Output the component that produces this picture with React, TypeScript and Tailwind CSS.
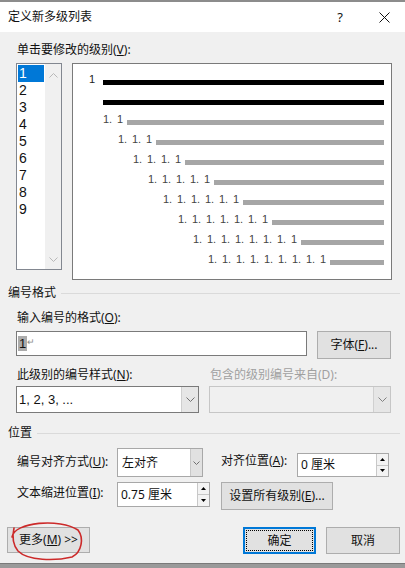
import React from "react";

const levelIndents = [
  "pl-[30px]",
  "pl-[45px]",
  "pl-[60px]",
  "pl-[75px]",
  "pl-[90px]",
  "pl-[105px]",
  "pl-[120px]",
  "pl-[135px]",
];

function Chevron({ up = false, color = "#606060" }: { up?: boolean; color?: string }) {
  return (
    <svg width="9" height="5" viewBox="0 0 9 5">
      <path
        d={up ? "M0.5 4.5 L4.5 0.5 L8.5 4.5" : "M0.5 0.5 L4.5 4.5 L8.5 0.5"}
        fill="none"
        stroke={color}
        strokeWidth="1"
      />
    </svg>
  );
}

function Spin() {
  return (
    <div className="w-[12px] h-full flex flex-col border-l border-[#c8c8c8]">
      <div className="flex-1 flex items-center justify-center bg-[#f3f3f3] border-b border-[#c8c8c8]">
        <svg width="5" height="3" viewBox="0 0 5 3">
          <path d="M0 3 L2.5 0 L5 3 Z" fill="#000" />
        </svg>
      </div>
      <div className="flex-1 flex items-center justify-center bg-[#f3f3f3]">
        <svg width="5" height="3" viewBox="0 0 5 3">
          <path d="M0 0 L2.5 3 L5 0 Z" fill="#000" />
        </svg>
      </div>
    </div>
  );
}

function GroupHeader({ title }: { title: string }) {
  return (
    <div className="flex items-center pl-[8px] pr-[5px]">
      <span className="leading-[16px]">{title}</span>
      <div className="flex-1 h-px bg-[#dadada] ml-[5px]" />
    </div>
  );
}

function LevelText({ level }: { level: number }) {
  const segs = Array.from({ length: level - 1 });
  return (
    <span className="flex text-[11px] leading-[11px] text-[#454545] font-[family-name:'Liberation_Sans',sans-serif]">
      {segs.map((_, i) => (
        <span key={i} className="w-[14px]">
          1.
        </span>
      ))}
      <span>1</span>
    </span>
  );
}

export default function App() {
  const levels = [1, 2, 3, 4, 5, 6, 7, 8, 9];

  return (
    <div className="w-[405px] h-[568px] bg-[#f0f0f0] flex flex-col relative overflow-hidden text-[12px] text-[#111] font-[family-name:'Noto_Sans','Noto_Sans_CJK_SC',sans-serif]">
      {/* title bar */}
      <div className="h-[32px] bg-white border-t-2 border-[#8c8c8c] flex items-center pl-[8px] pr-[15px]">
        <span className="leading-[16px]">定义新多级列表</span>
        <span className="ml-auto mr-[36px] text-[13px] leading-[16px]">?</span>
        <svg width="11" height="11" viewBox="0 0 11 11">
          <path d="M0.5 0.5 L10.5 10.5 M10.5 0.5 L0.5 10.5" stroke="#111" strokeWidth="1" />
        </svg>
      </div>

      <div className="mt-[10px] pl-[17px] leading-[16px]">
        单击要修改的级别(<u>V</u>):
      </div>

      <div className="mt-[5px] flex items-start pl-[16px]">
        {/* level list */}
        <div className="w-[46px] h-[207px] border border-[#828790] bg-white flex">
          <div className="w-[28px] pt-[1px] text-[14px] font-[family-name:'Liberation_Sans',sans-serif]">
            {levels.map((n) => (
              <div
                key={n}
                className={
                  n === 1
                    ? "mx-[1px] h-[17px] leading-[17px] pl-[1px] bg-[#0078d7] text-white"
                    : "mx-[1px] h-[17px] leading-[17px] pl-[1px]"
                }
              >
                {n}
              </div>
            ))}
          </div>
          <div className="flex-1 bg-[#f0f0f0] flex flex-col items-center justify-between pt-[9px] pb-[7px]">
            <Chevron up color="#b8b8b8" />
            <Chevron color="#b8b8b8" />
          </div>
        </div>

        {/* preview */}
        <div className="ml-[10px] w-[320px] h-[217px] border border-[#7a7a7a] bg-white pt-[2px] pr-[7px]">
          <div className="h-[20px] flex items-end pb-[1px] pl-[16px]">
            <span className="w-[14px] text-[11px] leading-[11px] text-[#222] font-[family-name:'Liberation_Sans',sans-serif]">
              1
            </span>
            <div className="flex-1 h-[5px] bg-black" />
          </div>
          <div className="h-[20px] flex items-end pb-[1px] pl-[30px]">
            <div className="flex-1 h-[5px] bg-black" />
          </div>
          {levelIndents.map((cls, i) => (
            <div key={i} className={"h-[20px] flex items-end pb-[1px] " + cls}>
              <LevelText level={i + 2} />
              <div className="flex-1 ml-[4px] h-[5px] bg-[#a6a6a6]" />
            </div>
          ))}
        </div>
      </div>

      <div className="mt-[5px]">
        <GroupHeader title="编号格式" />
      </div>

      <div className="mt-[9px] pl-[17px] leading-[16px]">
        输入编号的格式(<u>O</u>):
      </div>

      <div className="mt-[5px] flex items-start pl-[16px]">
        <div className="w-[291px] h-[25px] border border-[#7a7a7a] bg-white flex items-center pl-[1px]">
          <span className="bg-[#ababab] text-[13px] leading-[15px] px-[1px] font-[family-name:'Liberation_Sans',sans-serif]">
            1
          </span>
          <span className="text-[9px] text-[#8a8a8a] leading-[10px] mb-[3px]">↵</span>
        </div>
        <div className="ml-[10px] w-[74px] h-[28px] bg-[#e1e1e1] border border-[#adadad] flex items-center justify-center leading-[16px]">
          字体(<u>F</u>)...
        </div>
      </div>

      <div className="mt-[8px] flex pl-[16px] gap-[10px]">
        <div className="w-[183px]">
          <div className="pl-[1px] leading-[16px]">
            此级别的编号样式(<u>N</u>):
          </div>
          <div className="mt-[3px] h-[27px] border border-[#7a7a7a] bg-white flex">
            <div className="flex-1 flex items-center pl-[2px] text-[13px] font-[family-name:'Liberation_Sans',sans-serif]">
              1, 2, 3, ...
            </div>
            <div className="w-[17px] bg-[#e6e6e6] border-l border-[#cfcfcf] flex items-center justify-center">
              <Chevron color="#707070" />
            </div>
          </div>
        </div>
        <div className="w-[182px]">
          <div className="pl-[1px] leading-[16px] text-[#a0a0a0]">包含的级别编号来自(D):</div>
          <div className="mt-[3px] h-[27px] border border-[#c6c6c6] bg-[#f0f0f0] flex">
            <div className="flex-1" />
            <div className="w-[17px] bg-[#e6e6e6] border-l border-[#d0d0d0] flex items-center justify-center">
              <Chevron color="#808080" />
            </div>
          </div>
        </div>
      </div>

      <div className="mt-[12px]">
        <GroupHeader title="位置" />
      </div>

      <div className="mt-[7px] flex items-start pl-[16px]">
        <div className="w-[101px] mt-[6px] pl-[1px] leading-[16px]">
          编号对齐方式(<u>U</u>):
        </div>
        <div className="w-[86px] h-[29px] border border-[#a8a8a8] bg-white flex">
          <div className="flex-1 pl-[4px] pt-[5px] leading-[18px]">左对齐</div>
          <div className="w-[12px] bg-[#e1e1e1] border-l border-[#c8c8c8] flex items-center justify-center">
            <svg width="7" height="4" viewBox="0 0 7 4">
              <path d="M0.5 0.5 L3.5 3.5 L6.5 0.5" fill="none" stroke="#707070" strokeWidth="1" />
            </svg>
          </div>
        </div>
        <div className="w-[76px] ml-[18px] mt-[5px] leading-[16px]">
          对齐位置(<u>A</u>):
        </div>
        <div className="mt-[5px] w-[92px] h-[24px] border border-[#a8a8a8] bg-white flex">
          <div className="flex-1 pl-[3px] flex items-center leading-[16px]">0 厘米</div>
          <Spin />
        </div>
      </div>

      <div className="mt-[5px] flex items-start pl-[16px]">
        <div className="w-[101px] mt-[3px] pl-[1px] leading-[16px]">
          文本缩进位置(<u>I</u>):
        </div>
        <div className="w-[93px] h-[25px] border border-[#a8a8a8] bg-white flex">
          <div className="flex-1 pl-[3px] flex items-center leading-[16px]">0.75 厘米</div>
          <Spin />
        </div>
        <div className="ml-[11px] w-[112px] h-[28px] bg-[#e1e1e1] border border-[#adadad] flex items-center justify-center leading-[16px]">
          设置所有级别(<u>E</u>)...
        </div>
      </div>

      <div className="mt-[17px] flex items-start pl-[7px] pr-[5px]">
        <div className="w-[83px] h-[26px] bg-[#e1e1e1] border border-[#adadad] flex items-center justify-center leading-[16px]">
          更多(<u>M</u>) &gt;&gt;
        </div>
        <div className="ml-auto w-[73px] h-[27px] bg-[#e1e1e1] border-2 border-[#0078d7] p-[1px]">
          <div className="w-full h-full border border-dotted border-black flex items-center justify-center leading-[16px]">
            确定
          </div>
        </div>
        <div className="ml-[10px] w-[74px] h-[27px] bg-[#e1e1e1] border border-[#adadad] flex items-center justify-center leading-[16px]">
          取消
        </div>
      </div>

      <div className="mt-auto h-[5px] bg-[#9a9a9a] border-t border-[#7a7a7a]" />

      {/* red hand-drawn annotation */}
      <svg className="absolute inset-0 pointer-events-none" width="405" height="568" viewBox="0 0 405 568">
        <path
          d="M12 537 C14 522 60 518 78 530 C84 538 82 552 72 557 C55 561 28 561 18 551 C13 545 12 537 14 528"
          fill="none"
          stroke="#cc2a2a"
          strokeWidth="1.6"
          strokeLinecap="round"
        />
      </svg>
    </div>
  );
}
